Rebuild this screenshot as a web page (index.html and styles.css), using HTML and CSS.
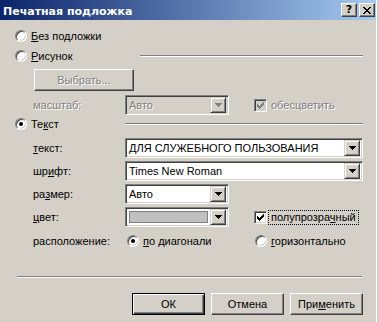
FILE: index.html
```html
<!DOCTYPE html>
<html lang="ru">
<head>
    <meta charset="UTF-8">
    <title>Печатная подложка</title>
    <link rel="stylesheet" href="styles.css">
</head>
<body>
    <div class="window">
        <!-- заголовок окна -->
        <div class="titlebar">
            <span class="title">Печатная подложка</span>
            <div class="title-buttons">
                <div class="tb-btn help">?</div>
                <div class="tb-btn">
                    <svg width="8" height="7" viewBox="0 0 8 7" shape-rendering="crispEdges"><path d="M0 0h2v1h-2z M6 0h2v1h-2z M1 1h2v1h-2z M5 1h2v1h-2z M2 2h4v1h-4z M3 3h2v1h-2z M2 4h4v1h-4z M1 5h2v1h-2z M5 5h2v1h-2z M0 6h2v1h-2z M6 6h2v1h-2z" fill="#000"/></svg>
                </div>
            </div>
        </div>

        <div class="content">
            <div class="row row-radio r1">
                <span class="radio"></span>
                <span class="radio-label"><u>Б</u>ез подложки</span>
            </div>

            <div class="row row-radio r2">
                <span class="radio"></span>
                <span class="radio-label picture-label"><u>Р</u>исунок</span>
                <div class="group-line"></div>
            </div>

            <div class="row r3">
                <div class="btn select-btn disabled">Выбрать...</div>
            </div>

            <div class="row field r4">
                <span class="field-label disabled">масштаб:</span>
                <div class="combo short disabled">
                    <span class="combo-text">Авто</span>
                    <span class="combo-btn"><svg width="7" height="4" viewBox="0 0 7 4" shape-rendering="crispEdges"><path d="M0 0h7v1h-7z M1 1h5v1h-5z M2 2h3v1h-3z M3 3h1v1h-1z"/></svg></span>
                </div>
                <div class="check-item disabled">
                    <span class="checkbox"><svg width="7" height="7" viewBox="0 0 7 7" shape-rendering="crispEdges"><path d="M0 2h1v3h-1z M1 3h1v3h-1z M2 4h1v3h-1z M3 3h1v3h-1z M4 2h1v3h-1z M5 1h1v3h-1z M6 0h1v3h-1z"/></svg></span>
                    <span class="check-label">обесцветить</span>
                </div>
            </div>

            <div class="row row-radio r5">
                <span class="radio on"></span>
                <span class="radio-label text-label">Те<u>к</u>ст</span>
                <div class="group-line"></div>
            </div>

            <div class="row field r6">
                <span class="field-label"><u>т</u>екст:</span>
                <div class="combo wide">
                    <span class="combo-text">ДЛЯ СЛУЖЕБНОГО ПОЛЬЗОВАНИЯ</span>
                    <span class="combo-btn"><svg width="7" height="4" viewBox="0 0 7 4" shape-rendering="crispEdges"><path d="M0 0h7v1h-7z M1 1h5v1h-5z M2 2h3v1h-3z M3 3h1v1h-1z"/></svg></span>
                </div>
            </div>

            <div class="row field r7">
                <span class="field-label">шр<u>и</u>фт:</span>
                <div class="combo wide">
                    <span class="combo-text">Times New Roman</span>
                    <span class="combo-btn"><svg width="7" height="4" viewBox="0 0 7 4" shape-rendering="crispEdges"><path d="M0 0h7v1h-7z M1 1h5v1h-5z M2 2h3v1h-3z M3 3h1v1h-1z"/></svg></span>
                </div>
            </div>

            <div class="row field r8">
                <span class="field-label">ра<u>з</u>мер:</span>
                <div class="combo short">
                    <span class="combo-text">Авто</span>
                    <span class="combo-btn"><svg width="7" height="4" viewBox="0 0 7 4" shape-rendering="crispEdges"><path d="M0 0h7v1h-7z M1 1h5v1h-5z M2 2h3v1h-3z M3 3h1v1h-1z"/></svg></span>
                </div>
            </div>

            <div class="row field r9">
                <span class="field-label"><u>ц</u>вет:</span>
                <div class="combo short">
                    <span class="swatch"></span>
                    <span class="combo-btn"><svg width="7" height="4" viewBox="0 0 7 4" shape-rendering="crispEdges"><path d="M0 0h7v1h-7z M1 1h5v1h-5z M2 2h3v1h-3z M3 3h1v1h-1z"/></svg></span>
                </div>
                <div class="check-item">
                    <span class="checkbox"><svg width="7" height="7" viewBox="0 0 7 7" shape-rendering="crispEdges"><path d="M0 2h1v3h-1z M1 3h1v3h-1z M2 4h1v3h-1z M3 3h1v3h-1z M4 2h1v3h-1z M5 1h1v3h-1z M6 0h1v3h-1z"/></svg></span>
                    <span class="check-label focused">полупрозра<u>ч</u>ный</span>
                </div>
            </div>

            <div class="row field r10">
                <span class="field-label">расположение:</span>
                <div class="pos-option first">
                    <span class="radio on"></span>
                    <span class="radio-label"><u>п</u>о диагонали</span>
                </div>
                <div class="pos-option">
                    <span class="radio"></span>
                    <span class="radio-label"><u>г</u>оризонтально</span>
                </div>
            </div>

            <div class="separator"></div>

            <div class="row actions">
                <div class="btn default">ОК</div>
                <div class="btn">Отмена</div>
                <div class="btn">При<u>м</u>енить</div>
            </div>
        </div>
    </div>
</body>
</html>
```

FILE: styles.css
```css
:root {
    --face: #d4d0c8;
    --shadow: #808080;
    --dark: #404040;
    --light: #ffffff;
}

* {
    box-sizing: border-box;
}

body {
    margin: 0;
    background: var(--face);
    font-family: Tahoma, "Liberation Sans", Arial, sans-serif;
    font-size: 11px;
    color: #000;
}

u {
    text-decoration: underline;
    text-underline-offset: 1px;
}

.window {
    width: 377px;
    height: 322px;
    background: var(--face);
    border-right: 1px solid var(--light);
}

/* заголовок */
.titlebar {
    height: 20px;
    display: flex;
    align-items: center;
    justify-content: space-between;
    padding: 0 1px 0 3px;
    background: linear-gradient(to right, #0a246a, #a6caf0);
}

.title {
    color: #fff;
    font-family: "DejaVu Sans", sans-serif;
    font-weight: 700;
    font-size: 11px;
    padding-top: 2px;
}

.title-buttons {
    display: flex;
    gap: 2px;
}

.tb-btn {
    width: 16px;
    height: 14px;
    display: flex;
    align-items: center;
    justify-content: center;
    background: var(--face);
    border: 1px solid;
    border-color: var(--light) var(--dark) var(--dark) var(--light);
    box-shadow: inset -1px -1px var(--shadow);
}

.tb-btn.help {
    font-family: "DejaVu Sans", sans-serif;
    font-weight: 700;
    font-size: 11px;
    line-height: 12px;
}

/* содержимое */
.content {
    display: flex;
    flex-direction: column;
    padding: 0 13px 0 15px;
}

.row {
    display: flex;
    align-items: center;
}

.row-radio {
    height: 16px;
}

.r1 { margin-top: 8px; }
.r2 { margin-top: 4px; }
.r3 { margin-top: 5px; }
.r4 { margin-top: 4px; }
.r5 { margin-top: 1px; }
.r6 { margin-top: 6px; }
.r7, .r8, .r9 { margin-top: 3px; }
.r10 { margin-top: 6px; height: 16px; }

.radio {
    width: 12px;
    height: 12px;
    flex-shrink: 0;
    position: relative;
    border-radius: 50%;
    background: #fff;
    border: 1px solid;
    border-color: var(--shadow) var(--light) var(--light) var(--shadow);
    box-shadow: inset 1px 1px var(--dark), inset -1px -1px var(--face);
}

.radio.on::after {
    content: "";
    position: absolute;
    left: 3px;
    top: 3px;
    width: 4px;
    height: 4px;
    border-radius: 50%;
    background: #000;
}

.radio-label {
    margin-left: 4px;
}

.picture-label {
    width: 109px;
}

.text-label {
    width: 94px;
}

.group-line {
    flex: 1;
    height: 2px;
    border-top: 1px solid var(--shadow);
    border-bottom: 1px solid var(--light);
}

.disabled {
    color: var(--shadow);
    text-shadow: 1px 1px 0 var(--light);
}

/* кнопки */
.btn {
    height: 22px;
    width: 75px;
    display: flex;
    align-items: center;
    justify-content: center;
    background: var(--face);
    border: 1px solid;
    border-color: var(--light) var(--dark) var(--dark) var(--light);
    box-shadow: inset -1px -1px var(--shadow), inset 1px 1px var(--face);
}

.btn.default {
    border: 1px solid #000;
    box-shadow: inset 1px 1px var(--light), inset -1px -1px var(--dark), inset -2px -2px var(--shadow);
}

.select-btn {
    width: 100px;
    margin-left: 19px;
}

/* поля */
.field-label {
    width: 92px;
    margin-left: 18px;
    flex-shrink: 0;
}

.combo {
    height: 20px;
    display: flex;
    align-items: center;
    padding: 2px;
    background: #fff;
    border: 1px solid;
    border-color: var(--shadow) var(--light) var(--light) var(--shadow);
    box-shadow: inset 1px 1px var(--dark), inset -1px -1px var(--face);
}

.combo.short {
    width: 104px;
}

.combo.wide {
    width: 238px;
}

.combo.disabled {
    background: var(--face);
}

.combo-text {
    flex: 1;
    padding-left: 1px;
    white-space: nowrap;
    overflow: hidden;
}

.combo-btn {
    width: 16px;
    height: 16px;
    flex-shrink: 0;
    display: flex;
    align-items: center;
    justify-content: center;
    background: var(--face);
    border: 1px solid;
    border-color: var(--face) var(--dark) var(--dark) var(--face);
    box-shadow: inset 1px 1px var(--light), inset -1px -1px var(--shadow);
}

.combo-btn svg {
    fill: #000;
}

.combo.disabled .combo-btn svg {
    fill: var(--shadow);
}

.swatch {
    flex: 1;
    height: 12px;
    margin: 0 2px 0 1px;
    background: #c0c0c0;
    border: 1px solid var(--shadow);
}

.check-item {
    display: flex;
    align-items: center;
    margin-left: 25px;
}

.checkbox {
    width: 13px;
    height: 13px;
    display: flex;
    align-items: center;
    justify-content: center;
    background: #fff;
    border: 1px solid;
    border-color: var(--shadow) var(--light) var(--light) var(--shadow);
    box-shadow: inset 1px 1px var(--dark), inset -1px -1px var(--face);
}

.checkbox svg {
    fill: #000;
}

.check-item.disabled .checkbox {
    background: var(--face);
}

.check-item.disabled .checkbox svg {
    fill: var(--shadow);
}

.check-label {
    margin-left: 4px;
}

.check-label.focused {
    margin-left: 1px;
    padding: 0 2px 1px 2px;
    border: 1px dotted #000;
}

.pos-option {
    display: flex;
    align-items: center;
}

.pos-option.first {
    width: 130px;
    padding-left: 2px;
}

.separator {
    margin: 27px 1px 0 2px;
    height: 2px;
    border-top: 1px solid var(--shadow);
    border-bottom: 1px solid var(--light);
}

.actions {
    margin-top: 15px;
    padding-left: 117px;
    gap: 6px;
}
```
